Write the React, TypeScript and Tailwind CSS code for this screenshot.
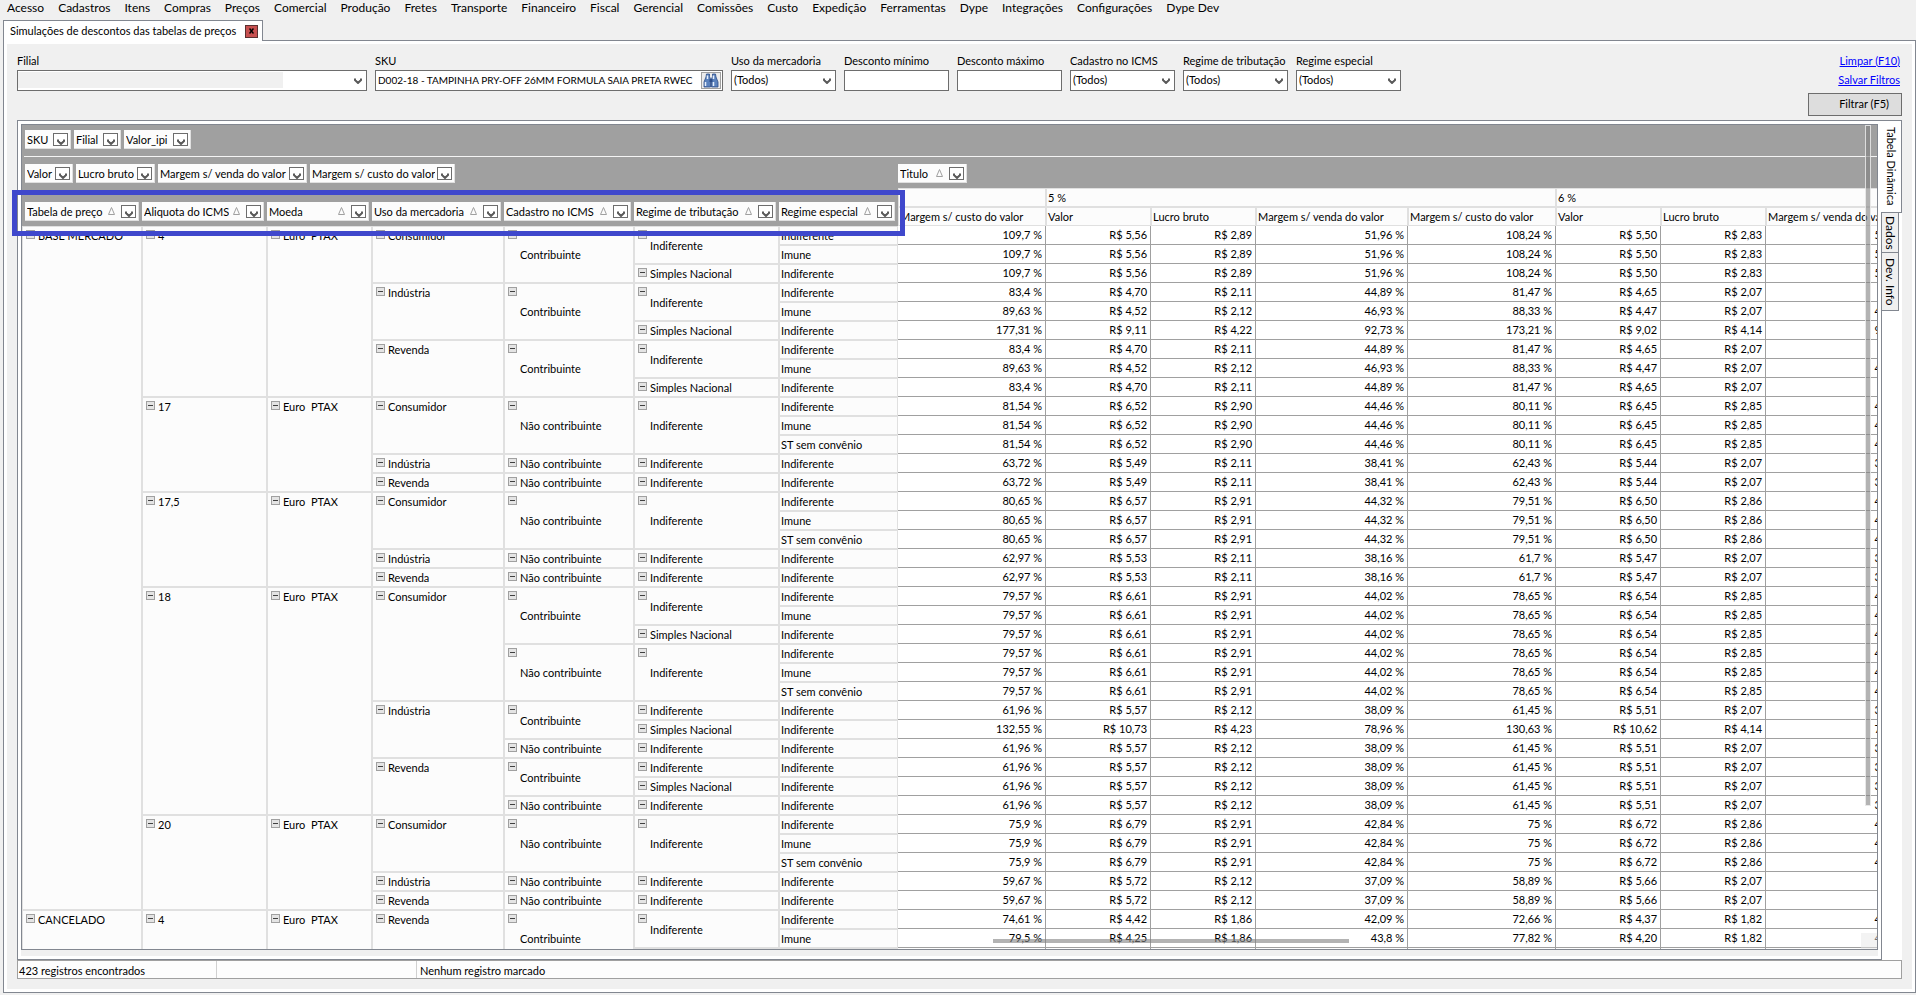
import { useState } from 'react';
import { clsx } from 'clsx';

const menuItems = [
  'Acesso', 'Cadastros', 'Itens', 'Compras', 'Preços', 'Comercial', 'Produção', 'Fretes',
  'Transporte', 'Financeiro', 'Fiscal', 'Gerencial', 'Comissões', 'Custo', 'Expedição',
  'Ferramentas', 'Dype', 'Integrações', 'Configurações', 'Dype Dev',
];

interface PivotNode {
  label: string;
  children?: PivotNode[];
}

const n = (label: string, ...children: PivotNode[]): PivotNode => ({ label, children });
const leaf = (label: string): PivotNode => ({ label });

// Blocks that repeat under several price tables
const imuneOrNot = () => n('Indiferente', leaf('Indiferente'), leaf('Imune'));
const simples = () => n('Simples Nacional', leaf('Indiferente'));
const single = () => n('Indiferente', leaf('Indiferente'));
const contribuinteFull = () => n('Contribuinte', imuneOrNot(), simples());
const contribuinteShort = () => n('Contribuinte', single(), simples());
const naoContribuinte = () => n('Não contribuinte', single());
const naoContribuinteFull = () =>
  n('Não contribuinte', n('Indiferente', leaf('Indiferente'), leaf('Imune'), leaf('ST sem convênio')));

const nationalRate = (rate: string) =>
  n(
    rate,
    n(
      'Euro  PTAX',
      n('Consumidor', naoContribuinteFull()),
      n('Indústria', naoContribuinte()),
      n('Revenda', naoContribuinte())
    )
  );

const tree: PivotNode[] = [
  n(
    'BASE MERCADO',
    n(
      '4',
      n(
        'Euro  PTAX',
        n('Consumidor', contribuinteFull()),
        n('Indústria', contribuinteFull()),
        n('Revenda', contribuinteFull())
      )
    ),
    nationalRate('17'),
    nationalRate('17,5'),
    n(
      '18',
      n(
        'Euro  PTAX',
        n('Consumidor', contribuinteFull(), naoContribuinteFull()),
        n('Indústria', contribuinteShort(), naoContribuinte()),
        n('Revenda', contribuinteShort(), naoContribuinte())
      )
    ),
    nationalRate('20')
  ),
  n('CANCELADO', n('4', n('Euro  PTAX', n('Revenda', contribuinteFull())))),
];

const repeat = (times: number, ...row: string[]) => Array.from({ length: times }, () => row);

const base4 = ['83,4 %', 'R$ 4,70', 'R$ 2,11', '44,89 %', '81,47 %', 'R$ 4,65', 'R$ 2,07', '44,5 %'];
const base4Imune = ['89,63 %', 'R$ 4,52', 'R$ 2,12', '46,93 %', '88,33 %', 'R$ 4,47', 'R$ 2,07', '46,31 %'];
const base18 = ['61,96 %', 'R$ 5,57', 'R$ 2,12', '38,09 %', '61,45 %', 'R$ 5,51', 'R$ 2,07', '37,57 %'];

const values: string[][] = [
  ...repeat(3, '109,7 %', 'R$ 5,56', 'R$ 2,89', '51,96 %', '108,24 %', 'R$ 5,50', 'R$ 2,83', '51,45 %'),
  base4,
  base4Imune,
  ['177,31 %', 'R$ 9,11', 'R$ 4,22', '92,73 %', '173,21 %', 'R$ 9,02', 'R$ 4,14', '91,59 %'],
  base4,
  base4Imune,
  base4,
  ...repeat(3, '81,54 %', 'R$ 6,52', 'R$ 2,90', '44,46 %', '80,11 %', 'R$ 6,45', 'R$ 2,85', '44,19 %'),
  ...repeat(2, '63,72 %', 'R$ 5,49', 'R$ 2,11', '38,41 %', '62,43 %', 'R$ 5,44', 'R$ 2,07', '38,05 %'),
  ...repeat(3, '80,65 %', 'R$ 6,57', 'R$ 2,91', '44,32 %', '79,51 %', 'R$ 6,50', 'R$ 2,86', '44,01 %'),
  ...repeat(2, '62,97 %', 'R$ 5,53', 'R$ 2,11', '38,16 %', '61,7 %', 'R$ 5,47', 'R$ 2,07', '37,84 %'),
  ...repeat(6, '79,57 %', 'R$ 6,61', 'R$ 2,91', '44,02 %', '78,65 %', 'R$ 6,54', 'R$ 2,85', '43,58 %'),
  base18,
  ['132,55 %', 'R$ 10,73', 'R$ 4,23', '78,96 %', '130,63 %', 'R$ 10,62', 'R$ 4,14', '77,97 %'],
  ...repeat(4, ...base18),
  ...repeat(3, '75,9 %', 'R$ 6,79', 'R$ 2,91', '42,84 %', '75 %', 'R$ 6,72', 'R$ 2,86', '42,56 %'),
  ...repeat(2, '59,67 %', 'R$ 5,72', 'R$ 2,12', '37,09 %', '58,89 %', 'R$ 5,66', 'R$ 2,07', '36,6 %'),
  ['74,61 %', 'R$ 4,42', 'R$ 1,86', '42,09 %', '72,66 %', 'R$ 4,37', 'R$ 1,82', '41,65 %'],
  ['79,5 %', 'R$ 4,25', 'R$ 1,86', '43,8 %', '77,82 %', 'R$ 4,20', 'R$ 1,82', '43,33 %'],
  ['', '', '', '', '', '', '', ''],
];

interface HeaderCell {
  label: string;
  level: number;
  span: number;
}

function flatten(nodes: PivotNode[], level = 0): HeaderCell[][] {
  return nodes.flatMap((node) => {
    if (!node.children) return [[{ label: node.label, level, span: 1 }]];
    const rows = flatten(node.children, level + 1);
    const [first, ...rest] = rows;
    return [[{ label: node.label, level, span: rows.length }, ...first], ...rest];
  });
}

const rows = flatten(tree);

const measureHeaders = [
  'Margem s/ custo do valor', 'Valor', 'Lucro bruto', 'Margem s/ venda do valor',
  'Margem s/ custo do valor', 'Valor', 'Lucro bruto', 'Margem s/ venda do valor',
];

function Chevron() {
  return (
    <svg className="w-2 h-[6px] shrink-0" viewBox="0 0 8 6" fill="none" aria-hidden="true">
      <path d="M1 0.5V2L4 5L7 2V0.5" stroke="#5a5a5a" strokeWidth="2" />
    </svg>
  );
}

function Binoculars() {
  return (
    <svg className="w-4 h-[15px]" viewBox="0 0 16 15" aria-hidden="true">
      <path d="M3.5 1H6.5V3.5L7.5 6V14H1V9L3 4Z" fill="#5b82bd" stroke="#2c4c88" strokeWidth="0.8" />
      <path d="M9.5 1H12.5L13 4L15 9V14H8.5V6L9.5 3.5Z" fill="#5b82bd" stroke="#2c4c88" strokeWidth="0.8" />
      <path d="M2.5 9V13M4.5 2.5V6M10.5 9V13M10.5 2.5V6" stroke="#e6effc" strokeWidth="1.5" />
      <path d="M6.5 6H9.5V9H6.5Z" fill="#2c4c88" />
    </svg>
  );
}

function FieldChip({ label, sorted, className }: { label: string; sorted?: boolean; className?: string }) {
  return (
    <div
      className={clsx(
        'flex items-center h-[19px] pl-[2px] pr-[2px] bg-[#fcfcfc] border-r border-b border-[#e0e0e0]',
        className
      )}
    >
      <span className="flex-1 min-w-0 pt-[2px] overflow-hidden whitespace-nowrap font-normal text-left">{label}</span>
      {sorted && (
        <svg className="w-[7px] h-2 mx-1 shrink-0" viewBox="0 0 7 8" fill="none" aria-hidden="true">
          <path d="M3.5 0.5L6.5 7.5H0.5Z" stroke="#a0a0a0" />
        </svg>
      )}
      <button
        type="button"
        aria-label={`Filtrar ${label}`}
        className="flex items-end justify-center w-[15px] h-[13px] ml-[2px] shrink-0 border border-[#6d6d6d] bg-white"
      >
        <Chevron />
      </button>
    </div>
  );
}

interface SelectFieldProps {
  id: string;
  label: string;
  options: string[];
  className: string;
  masked?: boolean;
}

function SelectField({ id, label, options, className, masked }: SelectFieldProps) {
  return (
    <div className={className}>
      <label htmlFor={id} className="block h-[17px] leading-4 whitespace-nowrap">
        {label}
      </label>
      <div className="relative">
        <select
          id={id}
          className="block w-full h-[21px] pl-[2px] pr-5 appearance-none bg-white border border-[#6d6d6d]"
        >
          {options.map((option) => (
            <option key={option}>{option}</option>
          ))}
        </select>
        {masked && (
          <span className="absolute left-px top-[2px] w-[265px] h-4 bg-[#f0f0f0] pointer-events-none" />
        )}
        <span className="absolute right-[5px] top-2 pointer-events-none">
          <Chevron />
        </span>
      </div>
    </div>
  );
}

function TextField({ id, label }: { id: string; label: string }) {
  return (
    <div className="w-[105px]">
      <label htmlFor={id} className="block h-[17px] leading-4 whitespace-nowrap">
        {label}
      </label>
      <input id={id} type="text" className="block w-full h-[21px] px-[2px] bg-white border border-[#6d6d6d]" />
    </div>
  );
}

function Filters() {
  return (
    <form className="flex justify-between pb-1" onSubmit={(e) => e.preventDefault()}>
      <div className="flex gap-2">
        <SelectField id="filial" label="Filial" options={['']} className="w-[350px]" masked />
        <div className="w-[348px]">
          <label htmlFor="sku" className="block h-[17px] leading-4">
            SKU
          </label>
          <div className="flex h-[21px] p-px bg-white border border-[#6d6d6d]">
            <input
              id="sku"
              type="text"
              className="flex-1 min-w-0 pl-px text-[10px] outline-none"
              defaultValue="D002-18 - TAMPINHA PRY-OFF 26MM FORMULA SAIA PRETA RWEC"
            />
            <button
              type="button"
              aria-label="Pesquisar SKU"
              className="flex items-center justify-center w-5 bg-[#ececec] border border-[#a0a0a0]"
            >
              <Binoculars />
            </button>
          </div>
        </div>
        <SelectField id="uso" label="Uso da mercadoria" options={['(Todos)']} className="w-[105px]" />
        <TextField id="desconto-min" label="Desconto mínimo" />
        <TextField id="desconto-max" label="Desconto máximo" />
        <SelectField id="icms" label="Cadastro no ICMS" options={['(Todos)']} className="w-[105px]" />
        <SelectField id="tributacao" label="Regime de tributação" options={['(Todos)']} className="w-[105px]" />
        <SelectField id="especial" label="Regime especial" options={['(Todos)']} className="w-[105px]" />
      </div>
      <div className="flex flex-col items-end">
        <a href="#limpar" className="h-[17px] leading-4 pr-[2px] text-[#0000ff] underline">
          Limpar (F10)
        </a>
        <a href="#salvar" className="h-5 leading-5 pr-[2px] text-[#0000ff] underline">
          Salvar Filtros
        </a>
        <button
          type="submit"
          className="w-[94px] h-[23px] mt-[3px] pr-3 text-right bg-[#dddddd] border border-[#6d6d6d]"
        >
          Filtrar (F5)
        </button>
      </div>
    </form>
  );
}

function RowHeader({ cell }: { cell: HeaderCell }) {
  const isLeaf = cell.level === 6;
  // The two tax columns centre their caption over the rows they span
  const centred = cell.level >= 4;

  return (
    <th
      scope="row"
      rowSpan={cell.span}
      className={clsx(
        'relative p-0 h-[19px] leading-[17px] text-left font-normal whitespace-pre bg-[#fcfcfc] border border-[#e0e0e0]',
        centred ? 'align-middle' : 'align-top',
        isLeaf ? 'pl-px' : 'pl-[15px]'
      )}
    >
      {!isLeaf && (
        <button
          type="button"
          aria-label={`Recolher ${cell.label}`}
          className="absolute left-[3px] top-[3px] flex items-center justify-center w-[9px] h-[9px] bg-[#e4e4e4] border border-[#a0a0a0]"
        >
          <span className="w-[5px] h-px bg-[#404040]" />
        </button>
      )}
      {cell.label}
    </th>
  );
}

const groupHeader =
  'p-0 pl-px h-[19px] leading-[17px] text-left font-normal whitespace-nowrap bg-[#fcfcfc] border border-[#e0e0e0]';

function PivotTable() {
  return (
    <table className="w-[1896px] table-fixed border-separate border-spacing-0">
      <colgroup>
        <col className="w-[120px]" />
        <col className="w-[125px]" />
        <col className="w-[105px]" />
        <col className="w-[132px]" />
        <col className="w-[130px]" />
        <col className="w-[145px]" />
        <col className="w-[119px]" />
        <col className="w-[148px]" />
        <col className="w-[105px]" />
        <col className="w-[105px]" />
        <col className="w-[152px]" />
        <col className="w-[148px]" />
        <col className="w-[105px]" />
        <col className="w-[105px]" />
        <col className="w-[152px]" />
      </colgroup>
      <thead>
        <tr>
          <th colSpan={7} rowSpan={2} className="p-0 h-[38px] align-top bg-[#a0a0a0]">
            <div className="grid grid-cols-[114px_122px_102px_129px_127px_142px_116px] gap-[3px] pl-[3px] pt-[14px]">
              <FieldChip label="Tabela de preço" sorted />
              <FieldChip label="Aliquota do ICMS" sorted />
              <FieldChip label="Moeda" sorted />
              <FieldChip label="Uso da mercadoria" sorted />
              <FieldChip label="Cadastro no ICMS" sorted />
              <FieldChip label="Regime de tributação" sorted />
              <FieldChip label="Regime especial" sorted />
            </div>
          </th>
          <th className={groupHeader} />
          <th colSpan={4} scope="colgroup" className={groupHeader}>
            5 %
          </th>
          <th colSpan={3} scope="colgroup" className={groupHeader}>
            6 %
          </th>
        </tr>
        <tr>
          {measureHeaders.map((label, i) => (
            <th key={i} scope="col" className={groupHeader}>
              {label}
            </th>
          ))}
        </tr>
      </thead>
      <tbody>
        {rows.map((cells, i) => (
          <tr key={i}>
            {cells.map((cell) => (
              <RowHeader key={cell.level} cell={cell} />
            ))}
            {values[i].map((value, j) => (
              <td
                key={j}
                className="p-0 pr-[3px] h-[19px] leading-[18px] text-right whitespace-nowrap bg-white border-r border-b border-[#a0a0a0]"
              >
                {value}
              </td>
            ))}
          </tr>
        ))}
      </tbody>
    </table>
  );
}

function PivotPanel() {
  return (
    <div className="relative flex-1 min-h-0 flex flex-col">
      <div className="relative flex-1 min-h-0 overflow-hidden bg-white border border-[#828790]">
        <div className="flex gap-[3px] h-[31px] pl-[3px] pt-[5px] bg-[#a0a0a0]">
          <FieldChip label="SKU" className="w-[46px]" />
          <FieldChip label="Filial" className="w-[47px]" />
          <FieldChip label="Valor_ipi" className="w-[67px]" />
        </div>
        <div className="pl-[2px] bg-[#a0a0a0]">
          <div className="h-px bg-[#f4f4f4]" />
        </div>
        <div className="flex h-[31px] pt-[7px] bg-[#a0a0a0]">
          <div className="flex gap-[3px] w-[876px] pl-[3px] shrink-0">
            <FieldChip label="Valor" className="w-[48px]" />
            <FieldChip label="Lucro bruto" className="w-[79px]" />
            <FieldChip label="Margem s/ venda do valor" className="w-[149px]" />
            <FieldChip label="Margem s/ custo do valor" className="w-[145px]" />
          </div>
          <FieldChip label="Titulo" sorted className="w-[69px]" />
        </div>
        <PivotTable />

        {/* Overlay scrollbars */}
        <div className="absolute right-[6px] top-0 bottom-[143px] w-[6px] bg-[#808080]/60 border border-white/70" />
        <div className="absolute left-[971px] right-[528px] bottom-[6px] h-1 bg-[#808080]/60" />
        <div className="absolute right-0 bottom-0 w-4 h-4 bg-[#e8e8e8]/50" />
      </div>
      {/* Highlight around the row fields */}
      <div className="absolute -left-[9px] top-[66px] w-[893px] h-[46px] border-[5px] border-[#3f48cc] pointer-events-none" />
    </div>
  );
}

const sideTabs = ['Tabela Dinâmica', 'Dados', 'Dev. Info'];

function SideTabs() {
  const [active, setActive] = useState('Tabela Dinâmica');

  return (
    <div className="relative flex flex-col items-start w-5 bg-white" role="tablist" aria-orientation="vertical">
      {sideTabs.map((tab) => (
        <button
          key={tab}
          type="button"
          role="tab"
          aria-selected={tab === active}
          onClick={() => setActive(tab)}
          className={clsx(
            'flex items-center justify-center [writing-mode:vertical-rl] leading-4 whitespace-nowrap border-[#828790]',
            tab === active
              ? 'w-[21px] h-[93px] -ml-px text-[11px] border-t border-r border-b bg-white'
              : 'w-[17px] text-[12px] border-r border-b bg-[#f0f0f0]',
            tab === 'Dados' && 'h-10',
            tab === 'Dev. Info' && 'h-[58px]'
          )}
        >
          {tab}
        </button>
      ))}
    </div>
  );
}

export default function App() {
  return (
    <div className="flex flex-col h-screen overflow-hidden bg-[#f0f0f0] font-[Tahoma,Lato,'Liberation_Sans',sans-serif] text-[11px] text-black">
      <nav className="flex gap-[14px] h-5 pl-[7px] text-[12px] leading-4 whitespace-nowrap">
        {menuItems.map((item) => (
          <button key={item} type="button" className="h-4">
            {item}
          </button>
        ))}
      </nav>

      <div className="flex h-[21px] pl-[3px]" role="tablist">
        <div
          className="relative flex items-center justify-between w-[260px] pl-[6px] pr-1 bg-white border-t border-l border-r border-[#828790]"
          role="tab"
          aria-selected="true"
        >
          <span className="whitespace-nowrap">Simulações de descontos das tabelas de preços</span>
          <button
            type="button"
            aria-label="Fechar"
            className="flex items-center justify-center w-[13px] h-[13px] shrink-0 bg-[#c75050] border border-[#5a3030]"
          >
            <svg className="w-[5px] h-[6px]" viewBox="0 0 5 6" aria-hidden="true">
              <path d="M0.5 0.5L4.5 5.5M4.5 0.5L0.5 5.5" stroke="#000" strokeWidth="1.5" />
            </svg>
          </button>
        </div>
        <div className="flex-1 border-b border-[#828790]" />
      </div>

      <main className="flex-1 min-h-0 flex flex-col ml-[3px] mb-[2px] p-[3px] bg-white border-l border-r border-b border-[#828790]">
        <div className="flex-1 min-h-0 flex flex-col px-[10px] pt-[9px] pb-[10px] bg-[#f0f0f0]">
          <Filters />
          <div className="flex-1 min-h-0 flex">
            <div className="flex-1 min-w-0 flex flex-col p-[3px] bg-white border border-[#828790]">
              <PivotPanel />
              <div className="h-[6px] bg-[#f0f0f0]" />
            </div>
            <SideTabs />
          </div>
          <footer className="flex h-[19px] leading-[19px] bg-[#fdfdfd] border border-[#a0a0a0]">
            <div className="w-[199px] pl-px border-r border-[#d0d0d0]">423 registros encontrados</div>
            <div className="w-[200px] border-r border-[#d0d0d0]" />
            <div className="flex-1 pl-[3px]">Nenhum registro marcado</div>
          </footer>
        </div>
      </main>
    </div>
  );
}
